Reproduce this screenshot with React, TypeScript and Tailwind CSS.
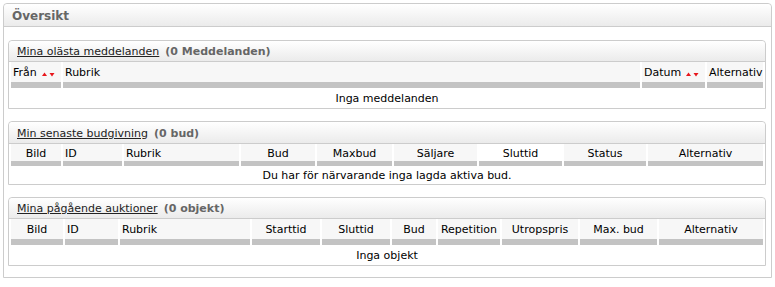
import React from 'react';

type Col = { label: string; align?: 'left' | 'center'; sort?: boolean; active?: boolean };

interface SectionProps {
    title: string;
    count: string;
    cols: Col[];
    template: string;
    empty: string;
    headH: string;
    rowH: string;
    barH: string;
    msgH: string;
}

const SortArrows = () => (
    <svg width="13" height="6" viewBox="0 0 13 6" className="ml-[5px] inline-block">
        <polygon points="0,5 2.5,1.5 5,5" fill="#e8161c" />
        <polygon points="7.5,2 12.5,2 10,5.5" fill="#e8161c" />
    </svg>
);

const Section: React.FC<SectionProps> = ({ title, count, cols, template, empty, headH, rowH, barH, msgH }) => (
    <div className="w-[758px] border border-[#cccccc] rounded-t-[4px] bg-white">
        <div className={`${headH} flex items-center pl-[8px] pt-[3px] bg-gradient-to-b from-white to-[#ebebeb] border-b border-[#cccccc] rounded-t-[4px]`}>
            <span className="text-[#222] underline">{title}</span>
            <span className="ml-[6px] font-bold text-[#666]">{count}</span>
        </div>
        <div className="pl-[2px] pr-[2px]">
            <div className={`grid gap-x-[2px] ${template}`}>
                {cols.map((c) => (
                    <div
                        key={c.label}
                        className={`${rowH} flex items-center pt-[3px] whitespace-nowrap ${c.active ? 'bg-white' : 'bg-[#f7f7f7]'} ${c.align === 'left' ? 'justify-start pl-[2px]' : 'justify-center'}`}
                    >
                        {c.label}
                        {c.sort && <SortArrows />}
                    </div>
                ))}
            </div>
            <div className={`grid gap-x-[2px] ${template}`}>
                {cols.map((c) => (
                    <div key={c.label} className={`${barH} bg-[#c3c3c3]`} />
                ))}
            </div>
            <div className={`${msgH} flex items-center justify-center pt-[3px]`}>{empty}</div>
        </div>
    </div>
);

export default function App() {
    return (
        <div className="w-[775px] h-[287px] bg-white pt-[3px] pl-[3px] text-[11px] text-black" style={{ fontFamily: '"DejaVu Sans", Verdana, sans-serif' }}>
            <div className="w-[769px] h-[275px] border border-[#cccccc] rounded-t-[4px]">
                <div className="h-[23px] flex items-center pl-[8px] pt-[2px] bg-gradient-to-b from-white to-[#ebebeb] border-b border-[#cccccc] rounded-t-[4px] text-[12px] font-bold text-[#666]">
                    Översikt
                </div>
                <div className="pl-[4px] pt-[13px] flex flex-col gap-[12px]">
                    <Section
                        title="Mina olästa meddelanden"
                        count="(0 Meddelanden)"
                        template="grid-cols-[50px_577px_63px_56px]"
                        headH="h-[21px]"
                        rowH="h-[20px]"
                        barH="h-[6px]"
                        msgH="h-[20px]"
                        empty="Inga meddelanden"
                        cols={[
                            { label: 'Från', align: 'left', sort: true },
                            { label: 'Rubrik', align: 'left' },
                            { label: 'Datum', align: 'left', sort: true },
                            { label: 'Alternativ', align: 'left' },
                        ]}
                    />
                    <Section
                        title="Min senaste budgivning"
                        count="(0 bud)"
                        template="grid-cols-[50px_59px_115px_74px_75px_83px_83px_82px_115px]"
                        headH="h-[22px]"
                        rowH="h-[17px]"
                        barH="h-[5px]"
                        msgH="h-[18px]"
                        empty="Du har för närvarande inga lagda aktiva bud."
                        cols={[
                            { label: 'Bild' },
                            { label: 'ID', align: 'left' },
                            { label: 'Rubrik', align: 'left' },
                            { label: 'Bud' },
                            { label: 'Maxbud' },
                            { label: 'Säljare' },
                            { label: 'Sluttid', active: true },
                            { label: 'Status' },
                            { label: 'Alternativ' },
                        ]}
                    />
                    <Section
                        title="Mina pågående auktioner"
                        count="(0 objekt)"
                        template="grid-cols-[52px_53px_130px_68px_68px_44px_62px_76px_77px_104px]"
                        headH="h-[21px]"
                        rowH="h-[20px]"
                        barH="h-[6px]"
                        msgH="h-[20px]"
                        empty="Inga objekt"
                        cols={[
                            { label: 'Bild' },
                            { label: 'ID', align: 'left' },
                            { label: 'Rubrik', align: 'left' },
                            { label: 'Starttid' },
                            { label: 'Sluttid' },
                            { label: 'Bud' },
                            { label: 'Repetition' },
                            { label: 'Utropspris' },
                            { label: 'Max. bud' },
                            { label: 'Alternativ' },
                        ]}
                    />
                </div>
            </div>
        </div>
    );
}
